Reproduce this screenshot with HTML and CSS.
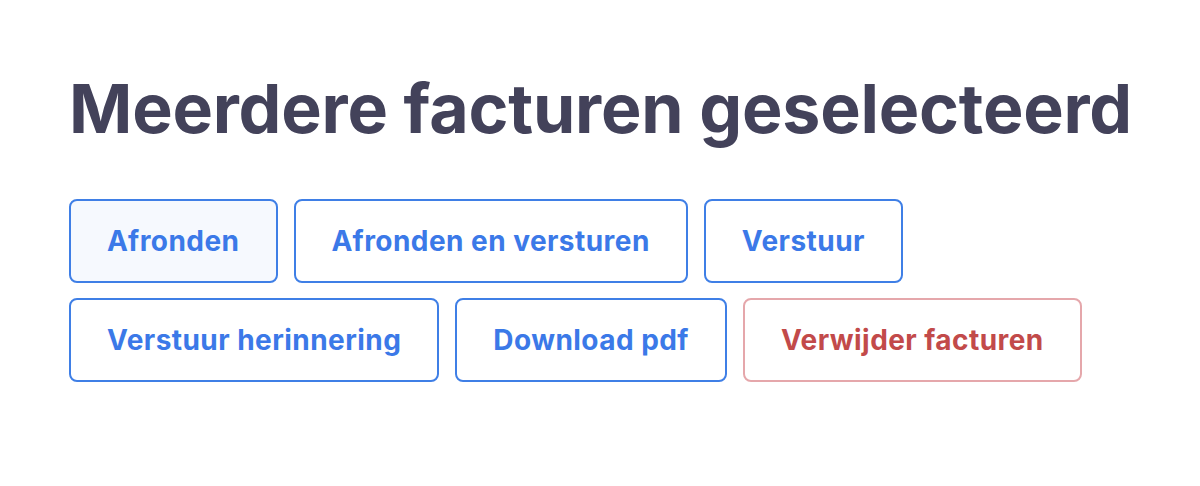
FILE: index.html
```html
<!DOCTYPE html>
<html lang="nl">
<head>
<meta charset="utf-8">
<link rel="stylesheet" href="styles.css">
</head>
<body>
<main class="panel">
  <h1 class="title">Meerdere facturen geselecteerd</h1>
  <div class="actions">
    <button class="btn btn-active">Afronden</button>
    <button class="btn">Afronden en versturen</button>
    <button class="btn">Verstuur</button>
    <button class="btn">Verstuur herinnering</button>
    <button class="btn">Download pdf</button>
    <button class="btn btn-danger">Verwijder facturen</button>
  </div>
</main>
</body>
</html>
```
FILE: styles.css
```css
html, body {
  margin: 0;
  padding: 0;
  background: #ffffff;
}
body {
  font-family: "Inter", "Liberation Sans", sans-serif;
}
.panel {
  padding: 66px 69px 0 69px;
}
.title {
  margin: 0 0 48px 0;
  font-size: 68px;
  line-height: 85px;
  font-weight: 700;
  color: #43425a;
  letter-spacing: -0.2px;
  white-space: nowrap;
}
.actions {
  display: flex;
  flex-wrap: wrap;
  gap: 15px 16px;
  max-width: 1040px;
}
.btn {
  font-family: inherit;
  font-size: 28px;
  font-weight: 700;
  letter-spacing: 0.45px;
  color: #3b79e8;
  background: #ffffff;
  border: 2px solid #3f7fe6;
  border-radius: 8px;
  height: 84px;
  padding: 0 36px;
  cursor: pointer;
}
.btn-active {
  background: #f6f9fe;
}
.btn-danger {
  color: #c24a4a;
  border-color: #e5a7ab;
}
```
